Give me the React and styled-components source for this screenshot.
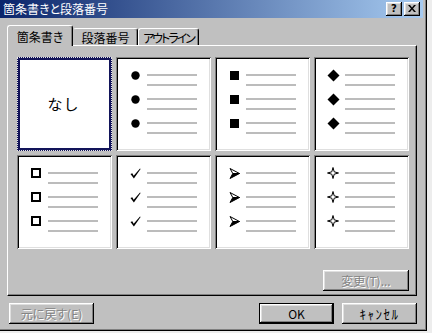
import React from 'react';
import styled, { createGlobalStyle, css } from 'styled-components';

const GlobalStyle = createGlobalStyle`
  html, body {
    margin: 0;
    padding: 0;
    background: #ededed;
  }
  body {
    font-family: "Noto Sans CJK JP", "Noto Sans", sans-serif;
    font-size: 12px;
    color: #000;
  }
  * { box-sizing: border-box; }
`;

const raised = css`
  box-shadow: inset -1px -1px 0 #000, inset 1px 1px 0 #fff,
    inset -2px -2px 0 #808080, inset 2px 2px 0 #dfdfdf;
`;

const sunken = css`
  box-shadow: inset 1px 1px 0 #808080, inset -1px -1px 0 #fff,
    inset 2px 2px 0 #000, inset -2px -2px 0 #dfdfdf;
`;

const Dialog = styled.div`
  width: 427px;
  height: 331px;
  background: #c0c0c0;
  border-right: 1px solid #000;
  border-bottom: 1px solid #000;
  box-shadow: inset -1px -1px 0 #808080;
  padding: 0 3px 0 0;
  display: flex;
  flex-direction: column;
`;

const TitleBar = styled.div`
  height: 18px;
  display: flex;
  align-items: center;
  justify-content: space-between;
  padding: 0 3px;
  background: linear-gradient(to right, #0a246a, #a6caf0);
`;

const TitleText = styled.span`
  color: #fff;
  font-size: 12px;
  line-height: 18px;
  font-feature-settings: "palt";
`;

const TitleButtons = styled.div`
  display: flex;
  gap: 2px;
`;

const TitleButton = styled.div`
  width: 16px;
  height: 14px;
  background: #c0c0c0;
  ${raised};
  display: flex;
  align-items: center;
  justify-content: center;
  font-family: "DejaVu Sans", sans-serif;
  font-weight: bold;
  font-size: 10px;
  line-height: 1;
  padding: 0 0 1px 0;
`;

const Body = styled.div`
  flex: 1;
  display: flex;
  flex-direction: column;
  padding: 7px 6px 0 7px;
`;

const TabRow = styled.div`
  height: 20px;
  display: flex;
  align-items: flex-end;
`;

const Tab = styled.div`
  position: relative;
  z-index: ${p => (p.$active ? 2 : 1)};
  width: ${p => p.$w}px;
  height: ${p => (p.$active ? 21 : 17)}px;
  margin-bottom: ${p => (p.$active ? -1 : 0)}px;
  background: #c0c0c0;
  border-top: 1px solid #fff;
  border-left: 1px solid ${p => (p.$noLeft ? '#c0c0c0' : '#fff')};
  border-right: 1px solid #000;
  border-radius: 3px 3px 0 0;
  box-shadow: inset -1px 0 0 #808080;
  display: flex;
  align-items: center;
  justify-content: center;
  padding-top: ${p => (p.$active ? 0 : 1)}px;
  font-size: 12px;
  font-feature-settings: "palt";
  letter-spacing: ${p => (p.$tight ? -2 : 0)}px;
  white-space: nowrap;
`;

const Panel = styled.div`
  height: 251px;
  background: #c0c0c0;
  border-top: 1px solid #fff;
  border-left: 1px solid #fff;
  border-right: 1px solid #000;
  border-bottom: 1px solid #000;
  box-shadow: inset -1px -1px 0 #808080;
  padding: 11px 7px 0 9px;
  display: flex;
  flex-direction: column;
`;

const Grid = styled.div`
  display: grid;
  grid-template-columns: repeat(4, 95px);
  grid-auto-rows: 94px;
  gap: 4px;
`;

const Cell = styled.div`
  background: #fff;
  ${sunken};
  display: flex;
  flex-direction: column;
  padding: 17px 0 0 12px;

  ${p => p.$selected && css`
    align-items: center;
    justify-content: center;
    padding: 0 2px 2px 0;
    box-shadow: inset 0 0 0 3px #12145a;
    outline: 1px dotted #e8e8e8;
    outline-offset: -1px;
  `}
`;

const NoneLabel = styled.span`
  font-size: 15px;
  letter-spacing: 1px;
`;

const BulletRow = styled.div`
  display: flex;
  align-items: flex-start;
  height: 24px;
`;

const Glyph = styled.div`
  width: 14px;
  height: 12px;
  margin-top: -5px;
  display: flex;
  align-items: center;
  justify-content: center;
`;

const Lines = styled.div`
  margin-left: 5px;
  display: flex;
  flex-direction: column;
  gap: 8px;
`;

const Line = styled.div`
  width: 50px;
  height: 2px;
  background: #bcbcbc;
`;

const ChangeRow = styled.div`
  margin-top: 21px;
  display: flex;
  justify-content: flex-end;
`;

const Footer = styled.div`
  margin-top: 7px;
  display: flex;
  justify-content: space-between;
  padding-left: 2px;
`;

const ButtonGroup = styled.div`
  display: flex;
  gap: 8px;
`;

const Button = styled.button`
  width: ${p => p.$w}px;
  height: 21px;
  padding: 0;
  border: none;
  background: #c0c0c0;
  font-family: "Noto Sans CJK JP", "Noto Sans", sans-serif;
  font-size: ${p => p.$fs || 12}px;
  letter-spacing: ${p => p.$ls || 0}px;
  line-height: 1;
  color: #000;
  display: flex;
  align-items: center;
  justify-content: center;
  font-feature-settings: "palt";
  ${raised};

  ${p => p.$default && css`
    box-shadow: inset 0 0 0 1px #000, inset -2px -2px 0 #000, inset 2px 2px 0 #fff,
      inset -3px -3px 0 #808080, inset 3px 3px 0 #dfdfdf;
  `}

  &:disabled {
    color: #848484;
    text-shadow: 1px 1px 0 #fff;
  }
`;

const Dot = () => (
  <svg width="9" height="9" viewBox="0 0 9 9"><circle cx="4.5" cy="4.5" r="4.2" fill="#000" /></svg>
);

const Square = () => (
  <svg width="9" height="9" viewBox="0 0 9 9"><rect x="0" y="0" width="9" height="9" fill="#000" /></svg>
);

const Diamond = () => (
  <svg width="13" height="13" viewBox="0 0 13 13"><polygon points="6.5,0.5 12.5,6.5 6.5,12.5 0.5,6.5" fill="#000" /></svg>
);

const HollowSquare = () => (
  <svg width="10" height="10" viewBox="0 0 10 10"><rect x="1" y="1" width="8" height="8" fill="none" stroke="#000" strokeWidth="2" /></svg>
);

const Check = () => (
  <svg width="11" height="11" viewBox="0 0 11 11">
    <path d="M0.5 6 L2.3 5.3 L3.7 7.8 L10 0.6 L10.6 1.1 L3.9 10.6 Z" fill="#000" />
  </svg>
);

const Arrow = () => (
  <svg width="11" height="11" viewBox="0 0 11 11">
    <polygon points="1,0.5 10.5,5.5 3.8,5.5" fill="#fff" stroke="#000" strokeWidth="1" strokeLinejoin="round" />
    <polygon points="3.8,5.5 10.5,5.5 1,10.5" fill="#000" stroke="#000" strokeWidth="1" strokeLinejoin="round" />
  </svg>
);

const Star = () => (
  <svg width="12" height="12" viewBox="0 0 12 12">
    <path d="M6 0.5 L7.2 4.8 L11.5 6 L7.2 7.2 L6 11.5 L4.8 7.2 L0.5 6 L4.8 4.8 Z" fill="#fff" stroke="#000" strokeWidth="1" strokeLinejoin="round" />
  </svg>
);

const bulletStyles = [Dot, Square, Diamond, HollowSquare, Check, Arrow, Star];

const BulletCell = ({ icon: Icon }) => (
  <Cell>
    {[0, 1, 2].map(i => (
      <BulletRow key={i}>
        <Glyph><Icon /></Glyph>
        <Lines>
          <Line />
          <Line />
        </Lines>
      </BulletRow>
    ))}
  </Cell>
);

const App = () => {
  return (
    <>
      <GlobalStyle />
      <Dialog>
        <TitleBar>
          <TitleText>箇条書きと段落番号</TitleText>
          <TitleButtons>
            <TitleButton>?</TitleButton>
            <TitleButton>
              <svg width="8" height="7" viewBox="0 0 8 7">
                <path d="M0 0 H2 L4 2.5 L6 0 H8 L5 3.5 L8 7 H6 L4 4.5 L2 7 H0 L3 3.5 Z" fill="#000" />
              </svg>
            </TitleButton>
          </TitleButtons>
        </TitleBar>
        <Body>
          <TabRow>
            <Tab $active $w={66}>箇条書き</Tab>
            <Tab $w={65} $noLeft>段落番号</Tab>
            <Tab $w={61} $tight>アウトライン</Tab>
          </TabRow>
          <Panel>
            <Grid>
              <Cell $selected>
                <NoneLabel>なし</NoneLabel>
              </Cell>
              {bulletStyles.map((Icon, i) => (
                <BulletCell key={i} icon={Icon} />
              ))}
            </Grid>
            <ChangeRow>
              <Button $w={86} disabled>変更(T)...</Button>
            </ChangeRow>
          </Panel>
          <Footer>
            <Button $w={85} disabled>元に戻す(E)</Button>
            <ButtonGroup>
              <Button $w={75} $default>OK</Button>
              <Button $w={75} $fs={13} $ls={1.5}>ｷｬﾝｾﾙ</Button>
            </ButtonGroup>
          </Footer>
        </Body>
      </Dialog>
    </>
  );
};

export default App;
